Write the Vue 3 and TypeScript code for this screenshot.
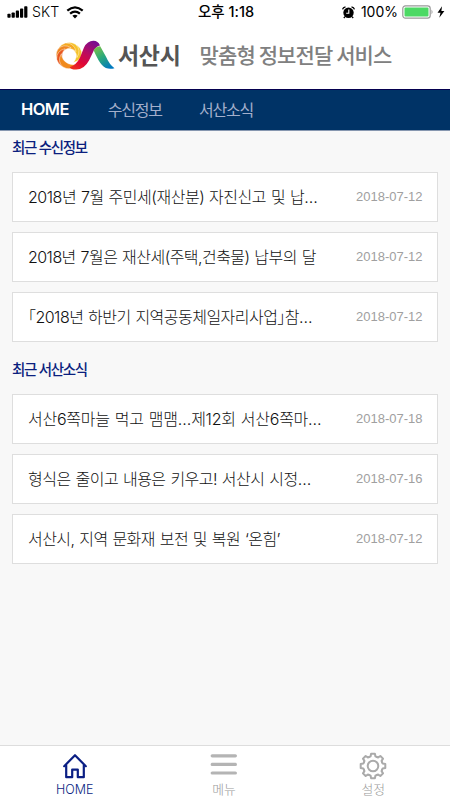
<script setup lang="ts">
interface Notice {
  title: string
  date: string
  tracking: number
}

interface Section {
  heading: string
  items: Notice[]
}

interface Blade {
  angle: number
  color: string
}

const tabs: string[] = ['HOME', '수신정보', '서산소식']

const sections: Section[] = [
  {
    heading: '최근 수신정보',
    items: [
      { title: '2018년 7월 주민세(재산분) 자진신고 및 납…', date: '2018-07-12', tracking: -0.47 },
      { title: '2018년 7월은 재산세(주택,건축물) 납부의 달', date: '2018-07-12', tracking: -0.54 },
      { title: '「2018년 하반기 지역공동체일자리사업」참…', date: '2018-07-12', tracking: -0.53 },
    ],
  },
  {
    heading: '최근 서산소식',
    items: [
      { title: '서산6쪽마늘 먹고 맴맴…제12회 서산6쪽마…', date: '2018-07-18', tracking: -0.24 },
      { title: '형식은 줄이고 내용은 키우고! 서산시 시정…', date: '2018-07-16', tracking: -0.5 },
      { title: '서산시, 지역 문화재 보전 및 복원 ‘온힘’', date: '2018-07-12', tracking: -0.54 },
    ],
  },
]

const blades: Blade[] = [
  { angle: 90, color: '#f6c62c' },
  { angle: 45, color: '#f6c32b' },
  { angle: 0, color: '#f5a821' },
  { angle: -45, color: '#ef851f' },
  { angle: -90, color: '#e8571f' },
  { angle: -135, color: '#f08a1d' },
]
const teeth: number[] = [0, 45, 90, 135, 180, 225, 270, 315]
</script>

<template>
  <div class="screen">
    <div class="status">
      <div class="status-left">
        <svg class="signal" width="21" height="12" viewBox="0 0 21 12">
          <rect x="0.4" y="7.8" width="3.2" height="4" rx="0.8" />
          <rect x="4.6" y="6.4" width="3.2" height="5.4" rx="0.8" />
          <rect x="8.8" y="4.6" width="3.2" height="7.2" rx="0.8" />
          <rect x="13" y="2.5" width="3.2" height="9.3" rx="0.8" />
          <rect x="17.2" y="0.3" width="3.2" height="11.5" rx="0.8" />
        </svg>
        <span class="carrier">SKT</span>
        <svg class="wifi" width="18" height="13" viewBox="0 0 18 13" fill="none" stroke="#000" stroke-width="2.2">
          <path d="M1.3 4.7Q9-2 16.7 4.7" />
          <path d="M4.1 7.7Q9 3.4 13.9 7.7" />
          <path d="M6.4 9.8Q9 7.6 11.6 9.8L9 12.5Z" fill="#000" stroke="none" />
        </svg>
      </div>
      <div class="clock">오후 1:18</div>
      <div class="status-right">
        <svg width="13" height="13" viewBox="0 0 13 13">
          <circle cx="6.5" cy="6.8" r="5.2" />
          <path d="M.6 3.4Q1 1.2 3.5.8M12.4 3.4Q12 1.2 9.5.8M3 10.6L1.8 12M10 10.6L11.2 12" fill="none" stroke="#000" stroke-width="1.3" />
          <path d="M6.8 3.6V7.2H4.2" fill="none" stroke="#fff" stroke-width="1.1" />
        </svg>
        <span class="percent">100%</span>
        <svg class="battery" width="32" height="14" viewBox="0 0 32 14">
          <rect x="0.8" y="0.8" width="27.4" height="12.4" rx="2.6" fill="#fff" stroke="#999" stroke-width="1.2" />
          <rect x="2.5" y="2.4" width="24" height="9.2" rx="1" fill="#4cd964" />
          <path d="M29.5 4.6Q31.6 7 29.5 9.4Z" fill="#999" />
        </svg>
        <svg class="bolt" width="8" height="12" viewBox="0 0 8 12"><path d="M5 .3L.5 6.7H3.5L2.3 11.7 7.4 5H4.4Z" /></svg>
      </div>
    </div>

    <header class="brand">
      <svg class="logo" width="60" height="32" viewBox="55 39 60 32">
        <defs>
          <linearGradient id="ribbon" gradientUnits="userSpaceOnUse" x1="92" y1="41" x2="74" y2="68">
            <stop offset="0" stop-color="#7b0d8e" />
            <stop offset="0.4" stop-color="#b90b60" />
            <stop offset="0.75" stop-color="#e00735" />
            <stop offset="1" stop-color="#ec2a1e" />
          </linearGradient>
          <linearGradient id="leaf" gradientUnits="userSpaceOnUse" x1="96" y1="47" x2="110" y2="68">
            <stop offset="0" stop-color="#7cc04b" />
            <stop offset="0.45" stop-color="#2daa78" />
            <stop offset="1" stop-color="#0079c1" />
          </linearGradient>
        </defs>
        <g transform="translate(69.2 55.6) scale(1.04)" stroke="#fff" stroke-width="0.4">
          <path
            v-for="b in blades"
            :key="b.angle"
            d="M6.6 -4Q1.4 -8.4 -5 -6Q-10 -4 -12 1Q-11.6 -10 -3.5 -12Q4.6 -12.4 6.6 -4Z"
            :fill="b.color"
            :transform="`rotate(${b.angle})`"
          />
        </g>
        <path d="M69.5 67.2Q76.5 65 80 57.5L84 47.5Q87.4 40.8 93.3 40.8Q98 40.7 100 45.4Q96.2 46.2 93.8 50.5L89 60.5Q84 69.8 75.8 69.6Q71 69.4 69.5 67.2Z" fill="url(#ribbon)" />
        <path d="M93.6 50.2Q96 46.3 100.2 46.3L105.9 56.6Q109.4 64.8 114.5 68.2Q107 70.4 102 65Q98.6 61.5 93.6 50.2Z" fill="url(#leaf)" />
      </svg>
      <span class="city">서산시</span>
      <span class="service">맞춤형 정보전달 서비스</span>
    </header>

    <nav class="tabs">
      <a v-for="(tab, i) in tabs" :key="tab" class="tab" :class="{ active: i === 0 }">{{ tab }}</a>
    </nav>

    <main class="content">
      <section v-for="section in sections" :key="section.heading" class="section">
        <h2 class="heading">{{ section.heading }}</h2>
        <ul class="list">
          <li v-for="item in section.items" :key="item.title" class="card">
            <span class="title" :style="{ letterSpacing: item.tracking + 'px' }">{{ item.title }}</span>
            <time class="date">{{ item.date }}</time>
          </li>
        </ul>
      </section>
    </main>

    <footer class="bottom">
      <a class="item home">
        <svg width="26" height="28" viewBox="0 0 26 28" fill="none" stroke="#0b1f84" stroke-width="2.2" stroke-linejoin="round" stroke-linecap="round">
          <path d="M2.2 14.2L13 3.2 23.8 14.2" />
          <path d="M4.2 13.4V25.2H10.2V17.6H15.8V25.2H21.8V13.4" />
        </svg>
        <span class="label">HOME</span>
      </a>
      <a class="item">
        <svg width="28" height="28" viewBox="0 0 28 28" stroke="#b4b4b4" stroke-width="3.2" stroke-linecap="round">
          <path d="M2.2 3.8H25.4M2.2 12.4H25.4M2.2 21H25.4" />
        </svg>
        <span class="label">메뉴</span>
      </a>
      <a class="item">
        <svg width="28" height="28" viewBox="-14 -14 28 28" fill="none" stroke="#aaa" stroke-width="2">
          <circle r="5.3" />
          <path v-for="t in teeth" :key="t" d="M-3.75 -9.05L-2.4 -9.7 -1.9 -12.3H1.9L2.4 -9.7 3.75 -9.05" stroke-linejoin="round" stroke-linecap="round" :transform="`rotate(${t})`" />
        </svg>
        <span class="label">설정</span>
      </a>
    </footer>
  </div>
</template>

<style>
body {
  margin: 0;
}
</style>

<style scoped>
.screen {
  display: flex;
  flex-direction: column;
  width: 450px;
  height: 800px;
  overflow: hidden;
  background: #f8f8f8;
  font-family: Inter, "Noto Sans CJK KR", sans-serif;
  white-space: nowrap;
}
.status {
  display: grid;
  grid-template-columns: 1fr auto 1fr;
  align-items: center;
  flex: none;
  height: 24px;
  padding: 0 5px 0 7px;
  background: #fff;
  color: #000;
}
.status-left,
.status-right {
  display: flex;
  align-items: center;
}
.status-right {
  justify-content: flex-end;
}
.carrier {
  margin-left: 4px;
  font: 300 14.2px/24px Inter, sans-serif;
}
.wifi {
  margin-left: 7px;
}
.clock {
  font: 500 14.5px/24px Inter, "Noto Sans CJK KR", sans-serif;
}
.percent {
  margin-left: 6px;
  font: 400 14px/24px Inter, sans-serif;
}
.battery {
  margin-left: 4px;
}
.bolt {
  margin-left: 3px;
}
.brand {
  display: flex;
  align-items: center;
  flex: none;
  box-sizing: border-box;
  height: 65px;
  padding: 0 0 4px 55px;
  background: #fff;
  font-family: "Noto Sans CJK KR", sans-serif;
}
.logo {
  margin-top: 1px;
}
.city {
  margin-left: 3px;
  color: #555;
  font-size: 23px;
  font-weight: 700;
  line-height: 34px;
  letter-spacing: -0.3px;
  margin-top: -1px;
}
.service {
  margin-left: 19px;
  color: #808080;
  font-size: 21px;
  font-weight: 500;
  line-height: 34px;
  letter-spacing: -0.9px;
  margin-top: -2px;
}
.tabs {
  display: flex;
  align-items: center;
  gap: 37px;
  flex: none;
  box-sizing: border-box;
  height: 42px;
  padding: 0 0 3px 21px;
  border-top: 1px solid #04004f;
  border-bottom: 1px solid #8797b0;
  background: #003366;
}
.tab {
  color: #a3afcb;
  font-size: 16px;
  letter-spacing: -1.2px;
}
.tab.active {
  margin-right: 2px;
  padding-top: 1px;
  color: #fff;
  font-size: 16.5px;
  font-weight: 600;
  letter-spacing: -0.6px;
}
.content {
  flex: 1;
  padding: 0 12px;
}
.heading {
  height: 41px;
  margin: 0;
  color: #0b1f7e;
  font-size: 14.5px;
  font-weight: 500;
  line-height: 34px;
  letter-spacing: -1.3px;
}
.section + .section {
  padding-top: 11px;
}
.list {
  display: flex;
  flex-direction: column;
  gap: 10px;
  margin: 0;
  padding: 0;
  list-style: none;
}
.card {
  display: flex;
  align-items: center;
  justify-content: space-between;
  box-sizing: border-box;
  height: 50px;
  padding: 0 14.5px 2px 15px;
  border: 1px solid #dedede;
  background: #fff;
}
.title {
  color: #111;
  font-size: 16px;
  font-weight: 300;
  word-spacing: 0.8px;
  font-feature-settings: "halt";
}
.date {
  padding-top: 1px;
  color: #a0a0a0;
  font-family: "Liberation Sans", sans-serif;
  font-size: 13px;
}
.bottom {
  display: grid;
  grid-template-columns: repeat(3, 1fr);
  flex: none;
  height: 55px;
  box-sizing: border-box;
  padding-right: 2px;
  border-top: 1px solid #ddd;
  background: #fff;
}
.item {
  display: flex;
  flex-direction: column;
  align-items: center;
  padding-top: 6px;
  color: #999;
}
.item.home {
  color: #0b1f84;
}
.label {
  font-size: 12.8px;
  font-weight: 300;
  line-height: 20px;
}
.home .label {
  font-size: 12.5px;
}
</style>
